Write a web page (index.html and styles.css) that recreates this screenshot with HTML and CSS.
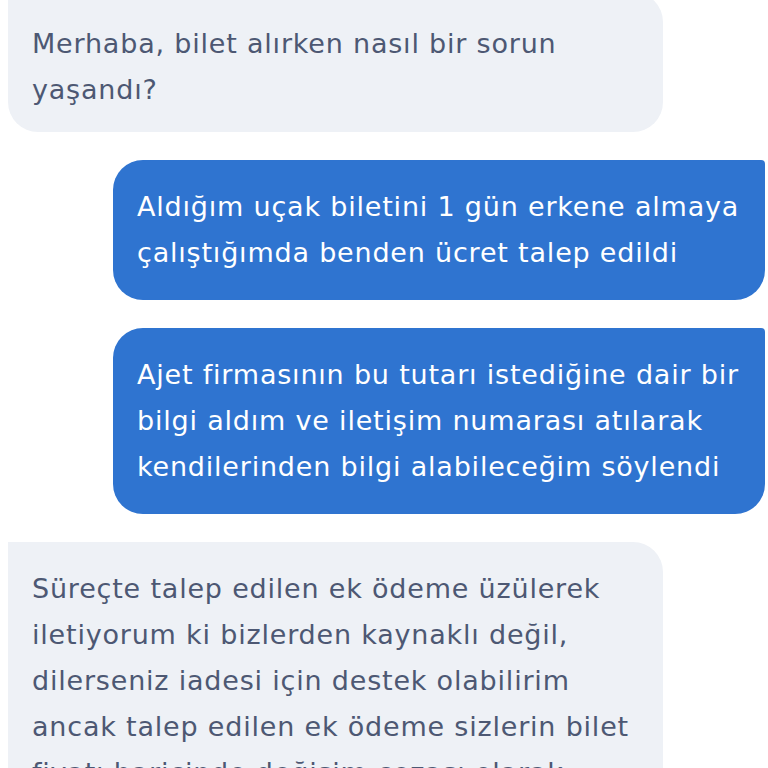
FILE: index.html
```html
<!DOCTYPE html>
<html lang="tr">
     <head>
          <meta charset="UTF-8">
          <meta name="viewport" content="width=device-width, initial-scale=1.0">
          <title>Destek</title>
          <link rel="stylesheet" href="styles.css">
     </head>
     <body>
          <div class="chat">
               <div class="msg in">Merhaba, bilet alırken nasıl bir sorun yaşandı?</div>
               <div class="msg out">Aldığım uçak biletini 1 gün erkene almaya çalıştığımda benden ücret talep edildi</div>
               <div class="msg out">Ajet firmasının bu tutarı istediğine dair bir bilgi aldım ve iletişim numarası atılarak kendilerinden bilgi alabileceğim söylendi</div>
               <div class="msg in">Süreçte talep edilen ek ödeme üzülerek iletiyorum ki bizlerden kaynaklı değil, dilerseniz iadesi için destek olabilirim ancak talep edilen ek ödeme sizlerin bilet fiyatı haricinde değişim cezası olarak talep edilmektedir</div>
          </div>
     </body>
</html>
```

FILE: styles.css
```css
body {
     font-family: "DejaVu Sans", sans-serif;
     background-color: #ffffff;
     margin: 0;
     padding: 0;
     overflow: hidden;
}
.chat {
     display: flex;
     flex-direction: column;
     gap: 28px;
     padding: 0 3px 0 8px;
     margin-top: -8px;
}
.msg {
     box-sizing: border-box;
     padding: 24px 18px 24px 24px;
     font-size: 27px;
     letter-spacing: 0.8px;
     line-height: 46px;
}
/* first bubble is scrolled partly out of view */
.msg:first-child {
     padding-top: 29px;
     padding-bottom: 19px;
}
.msg.in {
     align-self: flex-start;
     width: 655px;
     background-color: #eef1f6;
     color: #4d5873;
     border-radius: 0 30px 30px 30px;
}
.msg.out {
     align-self: flex-end;
     width: 652px;
     background-color: #2f74d0;
     color: #ffffff;
     border-radius: 30px 4px 30px 30px;
}
```
